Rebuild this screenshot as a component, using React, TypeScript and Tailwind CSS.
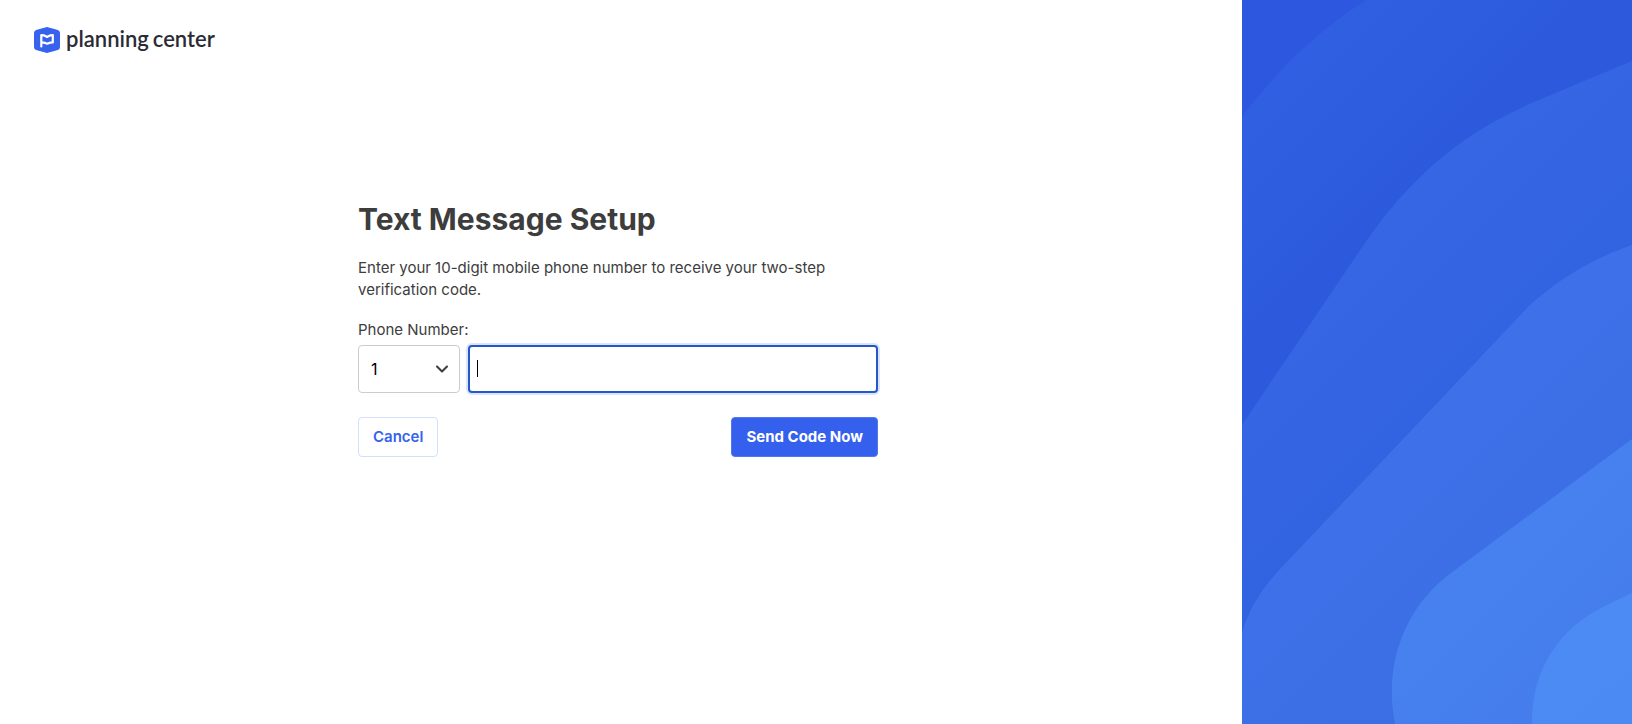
import { useState } from "react";
import { ChevronDown } from "lucide-react";

function Logo() {
  return (
    <a href="#" aria-label="planning center" className="flex w-fit items-start gap-1.5">
      <svg viewBox="0 0 26 26" className="size-[26px]" aria-hidden="true">
        <path
          d="M11.2.4a6 6 0 0 1 3.6 0l8.2 2.3A3.6 3.6 0 0 1 26 6.2v13.6a3.6 3.6 0 0 1-3 3.500l-8.200 2.300a6 6 0 0 1-3.600 0L3 23.300a3.600 3.600 0 0 1-3-3.500V6.200A3.600 3.600 0 0 1 3 2.700z"
          fill="#3762ee"
        />
        <path
          d="M7.300 19.500V8.200l2.500.1 3.300 1.700 3.300-1.700 2.400-.1v7.300l-2.500.1-3.200 1.100-3-1.100-2.600.1"
          fill="none"
          stroke="#fff"
          strokeWidth="2.200"
          strokeLinejoin="round"
          strokeLinecap="round"
        />
      </svg>
      <span className="flex gap-1 font-['Lato',sans-serif] text-[22px] leading-6 font-semibold text-[#2b2b35]">
        <span>planning</span>
        <span>center</span>
      </span>
    </a>
  );
}

const bands = [
  {
    id: "band-1",
    from: "#3060e1",
    to: "#2d5add",
    line: [40, 60, 170, 190],
    d: "M0 117C37 69 70 36 124 0H390V724H0Z",
  },
  {
    id: "band-2",
    from: "#3666e4",
    to: "#3162e0",
    line: [130, 240, 270, 380],
    d: "M390 61L297 100C215 134 165 182 121 246L0 425V724H390Z",
  },
  {
    id: "band-3",
    from: "#3e71e9",
    to: "#3b6de4",
    line: [140, 500, 260, 620],
    d: "M390 245C350 259 318 278 287 306L41 566C22 586 8 606 0 633V724H390Z",
  },
  {
    id: "band-4",
    from: "#4681ef",
    to: "#457dec",
    line: [220, 600, 310, 690],
    d: "M390 439L209 573C164 606 141 663 153 724H390Z",
  },
  {
    id: "band-5",
    from: "#4c8af4",
    to: "#4b89f3",
    line: [320, 640, 390, 724],
    d: "M390 593L363 606C318 627 289 670 290 724H390Z",
  },
];

function Waves() {
  return (
    <svg
      viewBox="0 0 390 724"
      preserveAspectRatio="xMidYMid slice"
      className="size-full"
      aria-hidden="true"
    >
      <defs>
        {bands.map((b) => (
          <linearGradient
            key={b.id}
            id={b.id}
            gradientUnits="userSpaceOnUse"
            x1={b.line[0]}
            y1={b.line[1]}
            x2={b.line[2]}
            y2={b.line[3]}
          >
            <stop offset="0" stopColor={b.from} />
            <stop offset="1" stopColor={b.to} />
          </linearGradient>
        ))}
      </defs>
      <rect width="390" height="724" fill="#2e57df" />
      {bands.map((b) => (
        <path key={b.id} d={b.d} fill={`url(#${b.id})`} />
      ))}
    </svg>
  );
}

export default function App() {
  const [phone, setPhone] = useState("");

  return (
    <div className="flex h-screen bg-white font-['Inter',sans-serif] text-[#3d3d3d]">
      <div className="flex min-w-0 flex-1 flex-col">
        <header className="px-[34px] pt-[27px]">
          <Logo />
        </header>

        <main className="flex justify-center pt-[146px] pr-1.5">
          <form className="w-full max-w-[520px]" onSubmit={(e) => e.preventDefault()}>
            <h1 className="text-[30px] leading-10 font-bold">Text Message Setup</h1>
            <p className="mt-[18px] text-[15px] leading-[22px]">
              Enter your 10-digit mobile phone number to receive your two-step verification code.
            </p>

            <label htmlFor="phone" className="mt-[18px] block text-[15px] leading-[22px]">
              Phone Number:
            </label>
            <div className="mt-1 flex gap-2">
              <div className="relative w-[102px] shrink-0">
                <select
                  aria-label="Country code"
                  defaultValue="1"
                  className="h-12 w-full appearance-none rounded-[4px] border border-[#cccccc] bg-white px-3 text-base text-black"
                >
                  <option value="1">1</option>
                  <option value="44">44</option>
                  <option value="61">61</option>
                </select>
                <ChevronDown
                  aria-hidden="true"
                  className="pointer-events-none absolute top-[14px] right-2 size-5 text-[#3d3d3d]"
                  strokeWidth={2.5}
                />
              </div>
              <div className="relative flex-1">
                <input
                  id="phone"
                  type="tel"
                  value={phone}
                  onChange={(e) => setPhone(e.target.value)}
                  className="peer h-12 w-full rounded-[4px] border-2 border-[#2259c7] bg-white px-2 text-base text-black ring-2 ring-[#dbe3fd] outline-none"
                />
                <span
                  aria-hidden="true"
                  className="pointer-events-none absolute top-[15px] left-[9px] h-[17px] w-px bg-black peer-focus:hidden"
                />
              </div>
            </div>

            <div className="mt-6 flex justify-between">
              <button
                type="button"
                className="h-10 rounded-[4px] border border-[#d3e0fb] bg-white px-3.5 text-[15px] font-semibold text-[#3762ee]"
              >
                Cancel
              </button>
              <button
                type="submit"
                className="h-10 rounded-[4px] border border-[#4f78f0] bg-[#3560ed] px-3.5 text-[15px] font-bold text-white"
              >
                Send Code Now
              </button>
            </div>
          </form>
        </main>
      </div>

      <aside className="w-[390px] shrink-0 bg-[#2f56e0]">
        <Waves />
      </aside>
    </div>
  );
}
